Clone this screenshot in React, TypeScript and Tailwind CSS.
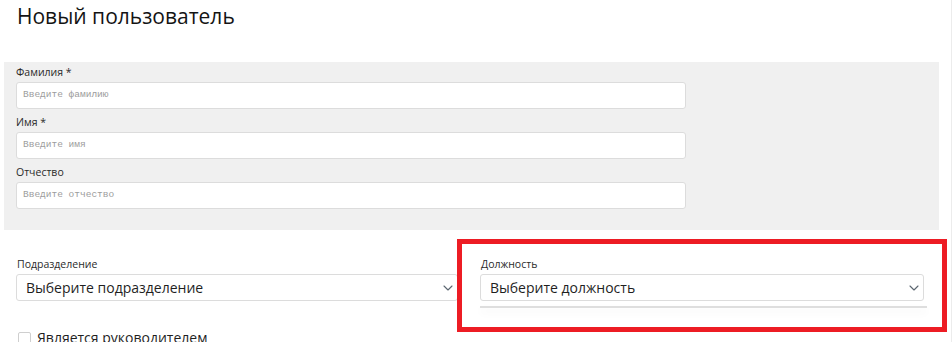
import React from "react";

const fields = [
  { label: "Фамилия *", placeholder: "Введите фамилию" },
  { label: "Имя *", placeholder: "Введите имя" },
  { label: "Отчество", placeholder: "Введите отчество" },
];

const Chevron = () => (
  <svg width="10" height="6" viewBox="0 0 10 6" fill="none" className="shrink-0">
    <path d="M1 1l4 4 4-4" stroke="#5b6670" strokeWidth="1.1" strokeLinecap="round" strokeLinejoin="round" />
  </svg>
);

const Select = ({ text, width }: { text: string; width: string }) => (
  <div
    className={`${width} h-[27px] flex items-center justify-between bg-white border border-[#dcdcdc] rounded-[3px] pl-[9px] pr-[4px] text-[14px] text-[#1f1f1f]`}
  >
    <span>{text}</span>
    <Chevron />
  </div>
);

export default function App() {
  return (
    <div
      className="relative w-[952px] h-[342px] overflow-hidden bg-white border-r border-[#ececec]"
      style={{ fontFamily: '"Open Sans", "Noto Sans", sans-serif' }}
    >
      <h1 className="pt-[2px] pl-[17px] text-[21px] leading-7 text-[#141414]">Новый пользователь</h1>

      <div className="mt-[32px] ml-[4px] w-[935px] bg-[#f0f0f0] px-3 pb-[21px]">
        {fields.map((f, i) => (
          <div key={f.label} className={i > 0 ? "pt-[3px]" : ""}>
            <div className="h-5 leading-5 text-[10.5px] text-[#2b2b2b]">{f.label}</div>
            <div className="w-[670px] h-[27px] flex items-center bg-white border border-[#dcdcdc] rounded-[3px] pl-[6px]">
              <span
                className="text-[9.5px] text-[#9c9c9c]"
                style={{ fontFamily: '"Liberation Mono", "DejaVu Sans Mono", monospace' }}
              >
                {f.placeholder}
              </span>
            </div>
          </div>
        ))}
      </div>

      <div className="ml-[16px] pt-[24px] flex gap-[22px]">
        <div className="w-[442px]">
          <div className="h-5 leading-5 text-[10.5px] text-[#2b2b2b] pl-[1px]">Подразделение</div>
          <Select text="Выберите подразделение" width="w-[442px]" />
          <label className="mt-[27px] ml-[2px] flex items-center gap-[6px] text-[14px] leading-5 text-[#1f1f1f]">
            <span className="w-[13px] h-[13px] border border-[#cfcfcf] rounded-[2px] bg-white" />
            Является руководителем
          </label>
        </div>
        <div className="w-[444px]">
          <div className="h-5 leading-5 text-[10.5px] text-[#2b2b2b] pl-[1px]">Должность</div>
          <Select text="Выберите должность" width="w-[444px]" />
          <div className="mt-[5px] w-[447px] h-[2px] bg-[#dedede] shadow-[0_4px_8px_rgba(0,0,0,0.07)]" />
        </div>
      </div>

      <div className="absolute left-[457px] top-[239px] w-[490px] h-[93px] border-[5px] border-[#ed1c24]" />
    </div>
  );
}
